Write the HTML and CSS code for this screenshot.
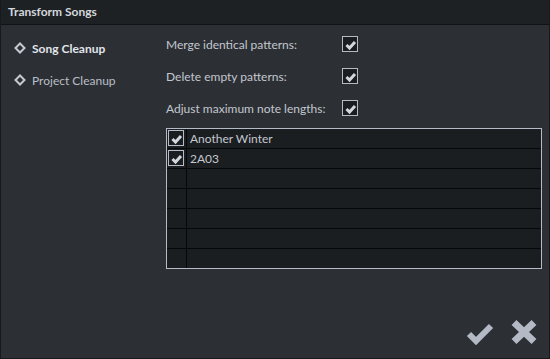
FILE: index.html
```html
<!DOCTYPE html>
<html lang="en">
<head>
    <meta charset="UTF-8">
    <title>Transform Songs</title>
    <link rel="stylesheet" href="styles.css">
</head>
<body>
    <div class="window">
        <div class="titlebar">Transform Songs</div>
        <div class="main">
            <div class="nav">
                <div class="nav-item active">
                    <svg class="diamond" width="12" height="12" viewBox="0 0 12 12"><path d="M6 1.5 L10.5 6 L6 10.5 L1.5 6 Z" fill="none" stroke="currentColor" stroke-width="2"/></svg>
                    Song Cleanup
                </div>
                <div class="nav-item">
                    <svg class="diamond" width="12" height="12" viewBox="0 0 12 12"><path d="M6 1.5 L10.5 6 L6 10.5 L1.5 6 Z" fill="none" stroke="currentColor" stroke-width="2"/></svg>
                    Project Cleanup
                </div>
            </div>
            <div class="content">
                <div class="options">
                    <div class="option">
                        <span class="label">Merge identical patterns:</span>
                        <span class="checkbox"><svg width="13" height="13" viewBox="0 0 13 13"><path d="M2.5 7 L5.5 10 L11 4" fill="none" stroke="currentColor" stroke-width="3"/></svg></span>
                    </div>
                    <div class="option">
                        <span class="label">Delete empty patterns:</span>
                        <span class="checkbox"><svg width="13" height="13" viewBox="0 0 13 13"><path d="M2.5 7 L5.5 10 L11 4" fill="none" stroke="currentColor" stroke-width="3"/></svg></span>
                    </div>
                    <div class="option">
                        <span class="label">Adjust maximum note lengths:</span>
                        <span class="checkbox"><svg width="13" height="13" viewBox="0 0 13 13"><path d="M2.5 7 L5.5 10 L11 4" fill="none" stroke="currentColor" stroke-width="3"/></svg></span>
                    </div>
                </div>
                <div class="song-list">
                    <div class="row">
                        <div class="cell-check"><span class="checkbox"><svg width="13" height="13" viewBox="0 0 13 13"><path d="M2.5 7 L5.5 10 L11 4" fill="none" stroke="currentColor" stroke-width="3"/></svg></span></div>
                        <div class="cell-name">Another Winter</div>
                    </div>
                    <div class="row">
                        <div class="cell-check"><span class="checkbox"><svg width="13" height="13" viewBox="0 0 13 13"><path d="M2.5 7 L5.5 10 L11 4" fill="none" stroke="currentColor" stroke-width="3"/></svg></span></div>
                        <div class="cell-name">2A03</div>
                    </div>
                    <div class="row"><div class="cell-check"></div><div class="cell-name"></div></div>
                    <div class="row"><div class="cell-check"></div><div class="cell-name"></div></div>
                    <div class="row"><div class="cell-check"></div><div class="cell-name"></div></div>
                    <div class="row"><div class="cell-check"></div><div class="cell-name"></div></div>
                    <div class="row"><div class="cell-check"></div><div class="cell-name"></div></div>
                </div>
            </div>
        </div>
        <div class="footer">
            <svg class="btn-icon" width="28" height="24" viewBox="0 0 28 24"><path d="M3 13 L10 20 L25 5" fill="none" stroke="currentColor" stroke-width="6"/></svg>
            <svg class="btn-icon" width="28" height="26" viewBox="0 0 28 26"><path d="M4 3.5 L24 22.5 M24 3.5 L4 22.5" fill="none" stroke="currentColor" stroke-width="7"/></svg>
        </div>
    </div>
</body>
</html>
```

FILE: styles.css
```css
* {
    box-sizing: border-box;
    margin: 0;
    padding: 0;
}
body {
    font-family: Lato, "Noto Sans", sans-serif;
    font-size: 12px;
    background-color: #2c3035;
    color: #c3c7ce;
}
.window {
    width: 550px;
    height: 359px;
    display: flex;
    flex-direction: column;
    border: 1px solid #17191c;
    border-top: none;
    background-color: #2c3035;
}
.titlebar {
    height: 25px;
    padding: 4px 0 0 7px;
    background-color: #1e2124;
    border-bottom: 1px solid #111315;
    color: #d4d8de;
    font-weight: bold;
}
.main {
    display: flex;
}
.nav {
    width: 165px;
    padding-top: 15px;
    display: flex;
    flex-direction: column;
    gap: 16px;
}
.nav-item {
    height: 16px;
    display: flex;
    align-items: center;
    gap: 6px;
    padding-left: 13px;
    color: #b9bec6;
}
.nav-item.active {
    color: #e2e5ea;
    font-weight: bold;
}
.diamond {
    color: #c6cbd3;
}
.content {
    width: 376px;
}
.options {
    padding-top: 11px;
    display: flex;
    flex-direction: column;
    gap: 16px;
}
.option {
    height: 16px;
    display: flex;
    align-items: center;
}
.label {
    width: 176px;
}
.checkbox {
    width: 16px;
    height: 16px;
    border: 1px solid #b6bcc7;
    background-color: #1b1e21;
    color: #d2d6dd;
    display: flex;
    align-items: center;
    justify-content: center;
}
.song-list {
    margin-top: 12px;
    border: 1px solid #b6bcc7;
    background-color: #1b1e21;
}
.row {
    height: 20px;
    display: flex;
    border-bottom: 1px solid #060708;
}
.row:last-child {
    height: 19px;
    border-bottom: none;
}
.cell-check {
    width: 20px;
    border-right: 1px solid #060708;
    padding: 1px 0 0 1px;
}
.cell-name {
    flex: 1;
    padding: 2px 0 0 3px;
    color: #c3c7ce;
}
.footer {
    flex: 1;
    display: flex;
    justify-content: flex-end;
    align-items: flex-end;
    gap: 16px;
    padding: 0 11px 13px 0;
}
.btn-icon {
    color: #b3bac6;
}
```
